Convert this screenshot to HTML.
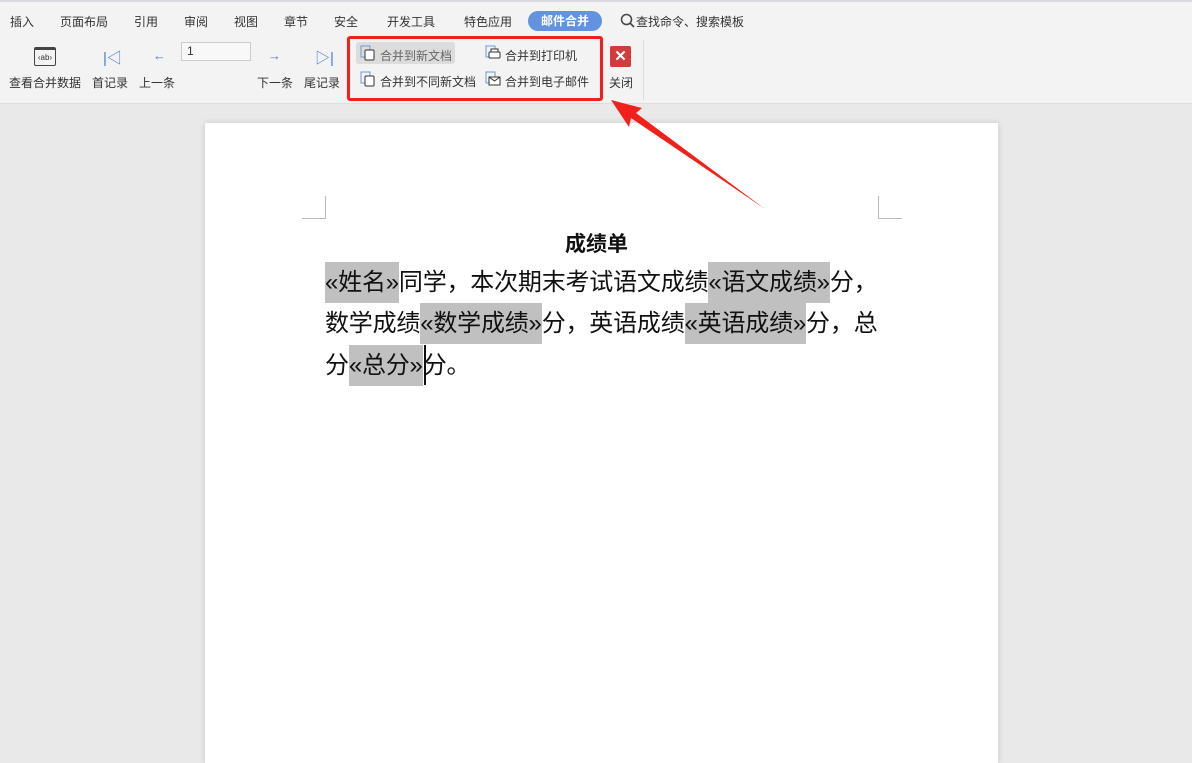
<!DOCTYPE html>
<html><head><meta charset="utf-8"><style>
*{margin:0;padding:0;box-sizing:border-box}
body{width:1192px;height:753px;overflow:hidden;background:#e9e9e9;font-family:"Liberation Sans","Noto Sans CJK SC",sans-serif;position:relative;color:#333}
.a{position:absolute;white-space:nowrap}
#tb{position:absolute;left:0;top:0;width:1192px;height:104px;background:#f3f3f3;border-top:2px solid #d8d8e0;border-bottom:1px solid #ddd}
.tab{font-size:12px;color:#333;top:13px}
.lbl{font-size:12px;color:#333}
.blue{color:#4a7ed0}
.page{position:absolute;left:205px;top:123px;width:793px;height:640px;background:#fff;box-shadow:0 0 6px rgba(0,0,0,.15)}
.t{position:absolute;left:325px;font-size:24px;color:#111;white-space:nowrap;line-height:41px;height:41px;letter-spacing:-0.2px}
.h{background:#c0c0c0;display:inline-block}
</style></head><body>
<div id="tb"></div>
<div class="a tab" style="left:10px">插入</div>
<div class="a tab" style="left:60px">页面布局</div>
<div class="a tab" style="left:134px">引用</div>
<div class="a tab" style="left:184px">审阅</div>
<div class="a tab" style="left:234px">视图</div>
<div class="a tab" style="left:284px">章节</div>
<div class="a tab" style="left:334px">安全</div>
<div class="a tab" style="left:387px">开发工具</div>
<div class="a tab" style="left:464px">特色应用</div>
<div class="a" style="left:528px;top:11px;width:74px;height:20px;border-radius:10px;background:#6393e0;color:#fff;font-size:12px;font-weight:bold;text-align:center;line-height:20px">邮件合并</div>
<svg class="a" style="left:620px;top:13px" width="16" height="16"><circle cx="6.5" cy="6.5" r="5" fill="none" stroke="#444" stroke-width="1.5"/><line x1="10" y1="10" x2="14" y2="14" stroke="#444" stroke-width="1.6"/></svg>
<div class="a tab" style="left:636px">查找命令、搜索模板</div>
<div class="a" style="left:34px;top:47px;width:22px;height:19px;border:1px solid #444;border-radius:2px;font-size:8px;text-align:center;line-height:16px;border-top-width:3px">‹ab›</div>
<div class="a lbl" style="left:9px;top:74px">查看合并数据</div>
<div class="a blue" style="left:103px;top:47px;font-size:15px">|◁</div>
<div class="a lbl" style="left:92px;top:74px">首记录</div>
<div class="a blue" style="left:153px;top:48px;font-size:13px">←</div>
<div class="a lbl" style="left:139px;top:74px">上一条</div>
<div class="a" style="left:181px;top:42px;width:70px;height:19px;border:1px solid #ccc;background:#f8f8f8;font-size:12px;padding-left:5px;line-height:17px">1</div>
<div class="a blue" style="left:268px;top:48px;font-size:13px">→</div>
<div class="a lbl" style="left:257px;top:74px">下一条</div>
<div class="a blue" style="left:315px;top:47px;font-size:15px">▷|</div>
<div class="a lbl" style="left:304px;top:74px">尾记录</div>
<div class="a" style="left:356px;top:42px;width:99px;height:22px;background:#dcdcdc;border-radius:3px"></div>
<svg class="a" style="left:360px;top:45px" width="16" height="16"><rect x="1" y="1" width="9" height="11" fill="none" stroke="#6b9ad8"/><rect x="5" y="5" width="9" height="10" rx="1" fill="#fff" stroke="#333"/></svg>
<div class="a lbl" style="left:380px;top:47px;color:#666">合并到新文档</div>
<svg class="a" style="left:360px;top:71px" width="16" height="16"><rect x="1" y="1" width="9" height="11" fill="none" stroke="#6b9ad8"/><rect x="5" y="5" width="9" height="10" rx="1" fill="#fff" stroke="#333"/></svg>
<div class="a lbl" style="left:380px;top:73px">合并到不同新文档</div>
<svg class="a" style="left:485px;top:45px" width="16" height="16"><rect x="1" y="1" width="9" height="11" fill="none" stroke="#6b9ad8"/><rect x="4" y="7" width="11" height="6" rx="1" fill="#fff" stroke="#333"/><rect x="6" y="4" width="7" height="3" fill="#fff" stroke="#333"/></svg>
<div class="a lbl" style="left:505px;top:47px">合并到打印机</div>
<svg class="a" style="left:485px;top:71px" width="16" height="16"><rect x="1" y="1" width="9" height="11" fill="none" stroke="#6b9ad8"/><rect x="4" y="6" width="11" height="8" fill="#fff" stroke="#333"/><path d="M4 6 L9.5 10 L15 6" fill="none" stroke="#333"/></svg>
<div class="a lbl" style="left:505px;top:73px">合并到电子邮件</div>
<div class="a" style="left:347px;top:36px;width:256px;height:65px;border:3px solid #f2201b;border-radius:3px"></div>
<div class="a" style="left:610px;top:46px;width:21px;height:21px;background:#d13b3b;border-radius:2px;color:#fff;font-size:15px;font-weight:bold;text-align:center;line-height:21px">✕</div>
<div class="a lbl" style="left:609px;top:74px">关闭</div>
<div class="a" style="left:643px;top:40px;width:1px;height:60px;background:#ddd"></div>
<div class="page"></div>
<div class="a" style="left:302px;top:196px;width:24px;height:23px;border-right:1px solid #bbb;border-bottom:1px solid #bbb"></div>
<div class="a" style="left:878px;top:196px;width:24px;height:23px;border-left:1px solid #bbb;border-bottom:1px solid #bbb"></div>
<div class="a" style="left:565px;top:228px;font-size:21px;font-weight:bold;color:#111">成绩单</div>
<div class="t" style="top:262px"><span class="h">«姓名»</span>同学，本次期末考试语文成绩<span class="h">«语文成绩»</span>分，</div>
<div class="t" style="top:303px">数学成绩<span class="h">«数学成绩»</span>分，英语成绩<span class="h">«英语成绩»</span>分，总</div>
<div class="t" style="top:345px">分<span class="h">«总分»</span>分。</div>
<div class="a" style="left:424px;top:345px;width:2px;height:40px;background:#111"></div>
<svg class="a" style="left:0;top:0" width="1192" height="753"><polygon points="611,100 642,108 636,113 765,209 631,118 629,127" fill="#f2201b"/></svg>
</body></html>
